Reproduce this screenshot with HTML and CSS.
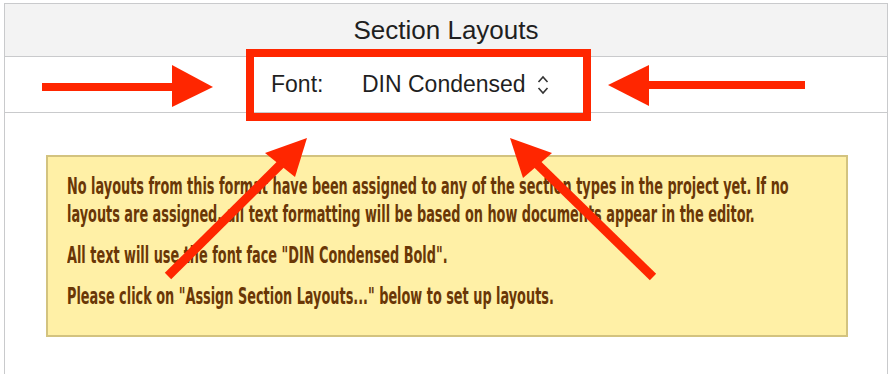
FILE: index.html
```html
<!DOCTYPE html>
<html lang="en">
<head>
    <meta charset="UTF-8">
    <title>Section Layouts</title>
    <link rel="stylesheet" href="styles.css">
</head>
<body>
    <div class="panel">
        <div class="panel-head">Section Layouts</div>

        <div class="toolbar">
            <span class="label">Font:</span>
            <span class="popup">
                DIN Condensed
                <svg class="chevrons" width="12" height="20" viewBox="0 0 12 20">
                    <path d="M1.5 7 L6 2 L10.5 7" fill="none" stroke="#333" stroke-width="1.6"/>
                    <path d="M1.5 13 L6 18 L10.5 13" fill="none" stroke="#333" stroke-width="1.6"/>
                </svg>
            </span>
        </div>

        <div class="content">
            <div class="notice">
                <div class="notice-text">
                    <p>No layouts from this format have been assigned to any of the section types in the project yet. If no layouts are assigned, all text formatting will be based on how documents appear in the editor.</p>
                    <p>All text will use the font face "DIN Condensed Bold".</p>
                    <p>Please click on "Assign Section Layouts..." below to set up layouts.</p>
                </div>
            </div>
        </div>
    </div>

    <!-- annotation overlay -->
    <svg class="marks" width="890" height="374" viewBox="0 0 890 374">
        <g fill="#ff2600" stroke="none">
            <rect x="42" y="83" width="132" height="8"/>
            <polygon points="172,65 213,87 172,107"/>

            <rect x="648" y="81" width="157" height="8"/>
            <polygon points="649,65 608,85 649,106"/>

            <polygon points="265,153 307,138 295,177"/>
            <polygon points="552,153 510,138 523,178"/>
        </g>
        <g stroke="#ff2600" stroke-width="9" fill="none">
            <line x1="168" y1="276" x2="284" y2="161"/>
            <line x1="653" y1="277" x2="535" y2="162"/>
        </g>
        <rect x="250" y="53" width="337" height="64" stroke="#ff2600" stroke-width="8" fill="none"/>
    </svg>
</body>
</html>
```

FILE: styles.css
```css
* {
    margin: 0;
    padding: 0;
    box-sizing: border-box;
}

body {
    font-family: 'Liberation Sans', Arial, sans-serif;
    background: #fff;
    color: #1f1f1f;
    width: 890px;
    height: 374px;
    overflow: hidden;
    position: relative;
}

.panel {
    margin-top: 3px;
    margin-left: 4px;
    width: 884px;
    height: 371px;
    border-left: 1px solid #c9cacc;
    border-right: 1px solid #c9cacc;
}

.panel-head {
    height: 54px;
    background: #f3f3f3;
    border-top: 1px solid #c9cacc;
    border-bottom: 1px solid #c9cacc;
    font-size: 26px;
    line-height: 52px;
    text-align: center;
}

.toolbar {
    height: 56px;
    border-bottom: 1px solid #c9cacc;
    display: flex;
    align-items: center;
    padding-left: 266px;
    font-size: 23px;
}

.toolbar .label {
    width: 91px;
}

.popup {
    display: flex;
    align-items: center;
    gap: 11px;
}

.content {
    padding: 42px 39px 0 41px;
}

.notice {
    background: #fff0a6;
    border: 2px solid #d3c37f;
    padding: 15px 0 0 19px;
    color: #6a3706;
    height: 182px;
    overflow: hidden;
}

/* DIN Condensed look: condensed bold face squeezed sideways */
.notice-text {
    width: 1206px;
    font-family: 'DejaVu Sans Condensed', 'DejaVu Sans', sans-serif;
    font-stretch: condensed;
    font-weight: bold;
    font-size: 23px;
    line-height: 28px;
    transform: scaleX(0.622);
    transform-origin: 0 0;
}

.notice-text p + p {
    margin-top: 13px;
}

.marks {
    position: absolute;
    left: 0;
    top: 0;
    pointer-events: none;
}
```
